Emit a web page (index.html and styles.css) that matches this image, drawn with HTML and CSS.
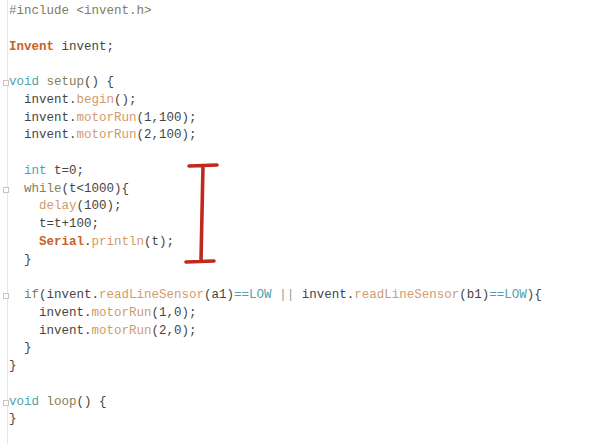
FILE: index.html
```html
<!DOCTYPE html>
<html>
<head>
<meta charset="utf-8">
<link rel="stylesheet" href="styles.css">
</head>
<body>
<div class="editor">
  <div class="gutter"></div>
  <div class="code">
    <div class="ln"><span class="pp">#include &lt;invent.h&gt;</span></div>
    <div class="ln"></div>
    <div class="ln"><span class="cls">Invent</span> invent;</div>
    <div class="ln"></div>
    <div class="ln fold"><span class="kw">void</span> <span class="fn">setup</span>() {</div>
    <div class="ln">  invent.<span class="m">begin</span>();</div>
    <div class="ln">  invent.<span class="m">motorRun</span>(1,100);</div>
    <div class="ln">  invent.<span class="m">motorRun</span>(2,100);</div>
    <div class="ln"></div>
    <div class="ln">  <span class="kw">int</span> t=0;</div>
    <div class="ln fold">  <span class="fn">while</span>(t&lt;1000){</div>
    <div class="ln">    <span class="m">delay</span>(100);</div>
    <div class="ln">    t=t+100;</div>
    <div class="ln">    <span class="cls">Serial</span>.<span class="m">println</span>(t);</div>
    <div class="ln">  }</div>
    <div class="ln"></div>
    <div class="ln fold">  <span class="fn">if</span>(invent.<span class="m">readLineSensor</span>(a1)<span class="kw">==LOW</span> <span class="op">||</span> invent.<span class="m">readLineSensor</span>(b1)<span class="kw">==LOW</span>){</div>
    <div class="ln">    invent.<span class="m">motorRun</span>(1,0);</div>
    <div class="ln">    invent.<span class="m">motorRun</span>(2,0);</div>
    <div class="ln">  }</div>
    <div class="ln">}</div>
    <div class="ln"></div>
    <div class="ln fold"><span class="kw">void</span> <span class="fn">loop</span>() {</div>
    <div class="ln">}</div>
  </div>
  <svg class="mark" width="40" height="104" viewBox="0 0 40 104">
    <path d="M5 3 L33 2 M19 3 L17 98 M2 99 L30 98" stroke="#c0291d" stroke-width="3.6" stroke-linecap="round" fill="none"/>
  </svg>
</div>
</body>
</html>
```
FILE: styles.css
```css
html, body {
  margin: 0;
  padding: 0;
  background: #ffffff;
}
.editor {
  position: relative;
  width: 592px;
  height: 444px;
  display: flex;
}
.gutter {
  width: 7px;
  flex: none;
  border-right: 1px solid #e6e6e6;
}
.code {
  padding: 3px 0 0 1px;
  font-family: "Liberation Mono", monospace;
  font-size: 12.5px;
  color: #454545;
}
.ln {
  position: relative;
  height: 17.75px;
  line-height: 17.75px;
  white-space: pre;
}
.fold::before {
  content: "";
  position: absolute;
  left: -6px;
  top: 6px;
  width: 4px;
  height: 4px;
  border: 1px solid #c4c4c4;
  background: #fff;
}
.pp { color: #7d7d62; }
.cls { color: #c5632c; font-weight: bold; }
.kw { color: #4f9fae; }
.fn { color: #80805a; }
.m { color: #d19a6e; }
.op { color: #9a9a9a; }
.mark {
  position: absolute;
  left: 184px;
  top: 163px;
}
```
